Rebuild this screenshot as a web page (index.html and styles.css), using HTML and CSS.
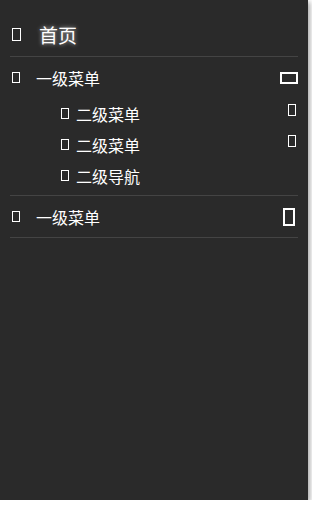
FILE: index.html
```html
<!DOCTYPE html>
<html lang="zh">

<head>
    <meta charset="UTF-8">
    <meta name="viewport" content="width=device-width, initial-scale=1.0">
    <title>侧边导航</title>
    <link rel="stylesheet" href="styles.css">
</head>

<body>
    <div class="sidebar">
        <div class="header">
            <span class="icon icon-home"></span>
            <span class="title">首页</span>
        </div>
        <ul class="menu">
            <li class="item">
                <div class="row">
                    <span class="icon"></span>
                    <span class="label">一级菜单</span>
                    <span class="arrow arrow-open"></span>
                </div>
                <ul class="sub">
                    <li class="sub-row">
                        <span class="icon icon-sm"></span>
                        <span class="sub-label">二级菜单</span>
                        <span class="arrow arrow-sm"></span>
                    </li>
                    <li class="sub-row">
                        <span class="icon icon-sm"></span>
                        <span class="sub-label">二级菜单</span>
                        <span class="arrow arrow-sm"></span>
                    </li>
                    <li class="sub-row">
                        <span class="icon icon-sm"></span>
                        <span class="sub-label">二级导航</span>
                    </li>
                </ul>
            </li>
            <li class="item">
                <div class="row">
                    <span class="icon"></span>
                    <span class="label">一级菜单</span>
                    <span class="arrow arrow-closed"></span>
                </div>
            </li>
        </ul>
    </div>
</body>

</html>
```

FILE: styles.css
```css
html,
body {
    margin: 0;
    padding: 0;
    background: #fff;
}

body {
    font-family: "Noto Sans CJK SC", "Noto Sans", sans-serif;
    color: #fff;
}

ul {
    list-style: none;
    margin: 0;
    padding: 0;
}

.sidebar {
    width: 288px;
    height: 500px;
    padding: 0 10px;
    background-color: #2a2a2a;
    box-shadow: 2px 2px 5px rgba(0, 0, 0, 0.35);
}

/* ---------------- 头部 ---------------- */
.header {
    display: flex;
    align-items: center;
    height: 44px;
    padding-top: 12px;
    border-bottom: 1px solid #444;
}

.title {
    margin-left: 18px;
    font-size: 19px;
    text-shadow: 0 0 4px rgba(255, 255, 255, 0.7);
}

/* ---------------- 图标(方块) ---------------- */
.icon {
    display: inline-block;
    box-sizing: border-box;
    width: 8px;
    height: 11px;
    margin-left: 2px;
    border: 1px solid #fff;
}

.icon-home {
    width: 9px;
    height: 13px;
}

.icon-sm {
    margin-left: 51px;
    width: 8px;
    height: 11px;
}

/* ---------------- 一级菜单 ---------------- */
.item {
    border-bottom: 1px solid #444;
}

.row {
    display: flex;
    align-items: center;
    height: 41px;
    font-size: 16px;
}

.label {
    margin-left: 16px;
}

.arrow {
    display: inline-block;
    box-sizing: border-box;
    margin-left: auto;
    border: 2px solid #fff;
}

.arrow-open {
    width: 18px;
    height: 12px;
}

.arrow-closed {
    width: 12px;
    height: 18px;
    margin-right: 3px;
}

/* ---------------- 二级菜单 ---------------- */
.sub {
    padding-bottom: 4px;
}

.sub-row {
    display: flex;
    align-items: center;
    height: 31px;
    font-size: 16px;
}

.sub-label {
    margin-left: 7px;
}

.arrow-sm {
    width: 8px;
    height: 12px;
    margin-right: 2px;
    margin-top: -8px;
    border-width: 1px;
}
```
